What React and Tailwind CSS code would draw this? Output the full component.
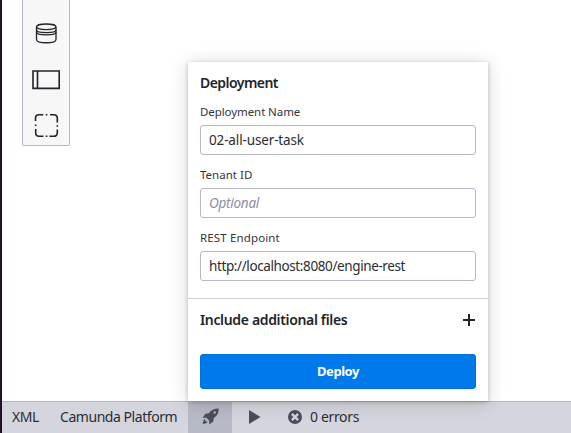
import React from "react";

function Field({ label, value, placeholder, labelClass, valueClass }) {
  return (
    <label className="mb-[10px] block">
      <span className="block h-[23px] text-[11.5px] leading-[20px] text-[#33353c]">
        <span className={labelClass}>{label}</span>
      </span>
      <input
        className={
          "block h-[30px] w-full rounded-[3px] border border-[#b7b6c5] bg-white px-2 text-[13.5px] text-[#2b2d34] outline-none placeholder:italic placeholder:text-[#8d8fa5] placeholder:opacity-100 " +
          valueClass
        }
        defaultValue={value}
        placeholder={placeholder}
      />
    </label>
  );
}

function Palette() {
  return (
    <div className="ml-5 flex h-[146px] w-12 flex-col items-center rounded-b-[2px] border border-t-0 border-[#b7b6c5] bg-[#f7f7f7]">
      <svg className="block" width="46" height="145" viewBox="0 0 46 145" fill="none" stroke="#22242a">
        <g strokeWidth="1.3">
          <path d="M13.5 27v12.500c0 4.300 19.500 4.300 19.500 0V27" />
          <ellipse cx="23.25" cy="26.8" rx="9.75" ry="2.8" />
          <path d="M13.500 29.700c0 3.800 19.500 3.800 19.500 0M13.500 32.100c0 3.800 19.500 3.800 19.500 0" />
        </g>
        <path d="M10 71h26.200v17.400H10zM14.500 71v17.400" strokeWidth="1.600" />
        <g strokeWidth="1.600">
          <path d="M12.500 121V118a3.300 3.300 0 0 1 3.300-3.300h4.500M27 114.700H31a3.300 3.300 0 0 1 3.300 3.300v4.500M34.300 129.500v3.500a3.300 3.300 0 0 1-3.300 3.300h-4.500M20.500 136.300H16a3.300 3.300 0 0 1-3.300-3.300v-4" />
          <path d="M22.800 114.700h1.600M34.300 125.200v1.600M22.800 136.300h1.600M12.700 124.500v1.600" />
        </g>
      </svg>
    </div>
  );
}

function Deployment() {
  return (
    <section className="absolute left-[188px] top-[62px] z-10 h-[339px] w-[300px] bg-white text-[#22242a] shadow-[0_1px_4px_rgba(0,0,0,0.22),0_2px_18px_rgba(0,0,0,0.16)]">
      <div className="h-[237px] border-b border-[#cfcfd3] px-3 pt-[11px]">
        <h1 className="mb-[7px] h-[22px] text-[14px] font-semibold leading-[20px]"><span className="tracking-[-0.55px]">Deployment</span></h1>
        <Field label="Deployment Name" value="02-all-user-task" labelClass="tracking-[-0.08px]" valueClass="tracking-[-0.14px]" />
        <Field label="Tenant ID" placeholder="Optional" labelClass="tracking-[0.02px]" valueClass="tracking-[-0.25px]" />
        <Field label="REST Endpoint" value="http://localhost:8080/engine-rest" labelClass="tracking-[0.14px]" valueClass="tracking-[-0.39px]" />
      </div>
      <div className="flex h-[55px] items-start justify-between px-3 pt-[11px]">
        <h2 className="text-[14px] font-semibold leading-[20px]"><span className="tracking-[-0.34px]">Include additional files</span></h2>
        <svg className="mt-[4px] mr-[1px]" width="12" height="12" viewBox="0 0 12 12" stroke="#22242a" strokeWidth="2">
          <path d="M0 6h12M6 0v12" />
        </svg>
      </div>
      <button className="mx-3 block h-[35px] w-[276px] rounded-[3px] border border-[#0070e0] bg-[#0079eb] text-[13px] font-bold leading-[33px] text-white">
        <span className="tracking-[-0.45px]">Deploy</span>
      </button>
    </section>
  );
}

function StatusBar() {
  return (
    <footer className="flex h-8 items-center border-t border-[#b7b6c5] bg-[#d5d5de] text-[14px] leading-[30px] text-[#2b2d34]">
      <span className="w-[48px] pb-[2px] pl-[10px] tracking-[-0.5px]">XML</span>
      <span className="w-[138px] pb-[2px] pl-[10px] tracking-[-0.45px]">Camunda Platform</span>
      <span className="flex h-full w-11 items-center justify-center bg-[#b7b9c6]">
        <svg className="mb-[2px]" width="17" height="17" viewBox="0 0 18 18" fill="#4a4e5c">
          <path fillRule="evenodd" d="M17.700.5C13 .6 9.600 2 7.200 5.500L3.600 6 .6 10.200l4.200.2 2.800 3 .1 4 4.300-3 .5-3.700C16.100 8.500 17.700 5 17.700.5zM13.400 3.500a1.300 1.300 0 1 0 0 2.600 1.300 1.300 0 0 0 0-2.600z" />
          <path d="M3.600 11.500c-1.700.5-2.600 2.700-2.800 5.300 2.600 0 4.900-.8 5.500-2.500l-2 .8.600-1.800-1.900.6z" />
        </svg>
      </span>
      <span className="flex w-[45px] items-center justify-center pb-[2px]">
        <svg width="12" height="14" viewBox="0 0 12 14" fill="#4a4e5c"><path d="M0 0 11.500 7 0 14z" /></svg>
      </span>
      <span className="flex items-center gap-2 pb-[2px] pl-[11px]">
        <svg width="14" height="14" viewBox="0 0 14 14">
          <circle cx="7" cy="7" r="7" fill="#4a4e5c" />
          <path d="m3.900 3.900 6.200 6.200M10.100 3.900 3.900 10.100" stroke="#d5d5de" strokeWidth="2.200" />
        </svg>
        <span className="tracking-[-0.35px]">0 errors</span>
      </span>
    </footer>
  );
}

export default function App() {
  return (
    <div className="relative flex h-[433px] w-[571px] flex-col overflow-hidden border-l-2 border-[#240d28] bg-white font-['Noto_Sans',sans-serif]">
      <main className="flex-1"><Palette /></main>
      <StatusBar />
      <div className="absolute -left-0.5 top-0"><Deployment /></div>
    </div>
  );
}
